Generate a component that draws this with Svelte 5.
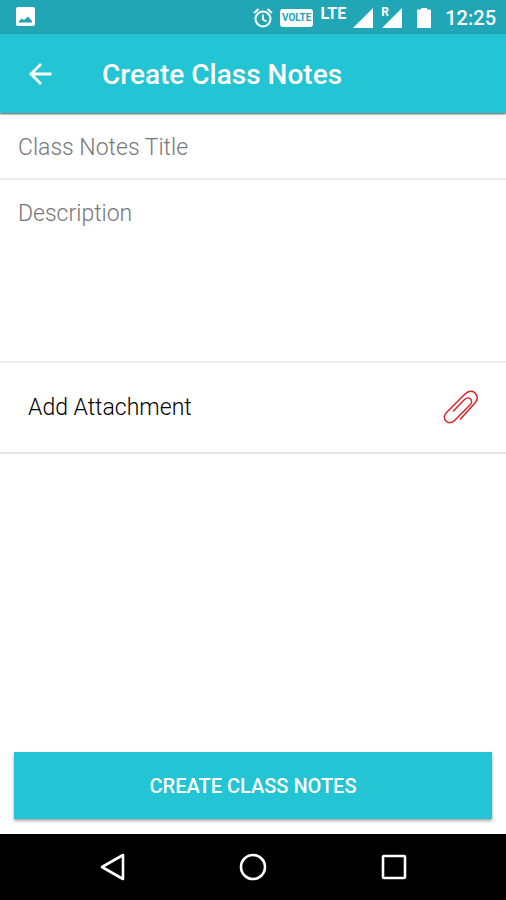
<script>
  let title = $state("");
  let description = $state("");
</script>

<div class="screen">
  <div class="status">
    <svg class="picture" width="20" height="20" viewBox="0 0 20 20">
      <rect x="0" y="0" width="19" height="19" rx="2" fill="#fff" />
      <path d="M3 15.500v-1.500l3-2.500 2 1.500 4-3.500 4 4.500v1.500z" fill="#21a6b6" />
    </svg>
    <div class="signals">
      <svg width="20" height="22" viewBox="0 0 20 22" fill="none" stroke="#fff">
        <circle cx="10" cy="12" r="7.500" stroke-width="2" />
        <path d="M10 7.500v5l3.500 2" stroke-width="1.700" />
        <path d="M1 6l4.500-4M19 6l-4.500-4" stroke-width="2" />
      </svg>
      <span class="volte">VOLTE</span>
      <span class="lte">LTE</span>
      <svg class="cell" width="20" height="20" viewBox="0 0 20 20">
        <path d="M20 0v20H0z" fill="#fff" />
      </svg>
      <span class="roaming">
        <small>R</small>
        <svg width="20" height="20" viewBox="0 0 20 20">
          <path d="M20 0v20H0z" fill="#fff" />
        </svg>
      </span>
      <svg class="battery" width="14" height="20" viewBox="0 0 14 20">
        <path d="M4 0h6v1.500h3q1 0 1 1V19q0 1-1 1H1q-1 0-1-1V2.500q0-1 1-1h3z" fill="#fff" />
      </svg>
      <span class="time">12:25</span>
    </div>
  </div>

  <header>
    <button class="back" aria-label="Back">
      <svg width="24" height="24" viewBox="0 0 24 24" fill="none" stroke="#fff" stroke-width="2.800">
        <path d="M23.500 12H3M13 2L3 12l10 10" />
      </svg>
    </button>
    <h1>Create Class Notes</h1>
  </header>

  <main>
    <input type="text" placeholder="Class Notes Title" aria-label="Class Notes Title" bind:value={title} />
    <textarea placeholder="Description" aria-label="Description" bind:value={description}></textarea>
    <button class="attach">
      <span>Add Attachment</span>
      <svg width="36" height="36" viewBox="0 0 36 36" fill="none" stroke="#d8232a" stroke-width="1.500" stroke-linecap="round">
        <path d="M10.500 21L21 10C23.500 7.500 26 7.500 27.500 9C29 10.500 29 13 27 15L11.500 30.500C9 33 5.500 33.500 3 31C.500 28.500 1 25 3.500 22.500L22 4C25.500 .500 30 .500 32.500 3.500C35 6.500 34.500 10 32 13L17.500 29" />
      </svg>
    </button>
    <div class="footer">
      <button class="create">CREATE CLASS NOTES</button>
    </div>
  </main>

  <nav>
    <button aria-label="Back">
      <svg width="28" height="28" viewBox="0 0 28 28">
        <path d="M25 2v24L4 14z" />
      </svg>
    </button>
    <button aria-label="Home">
      <svg width="28" height="28" viewBox="0 0 28 28">
        <circle cx="14" cy="14" r="12" />
      </svg>
    </button>
    <button aria-label="Recent apps">
      <svg width="28" height="28" viewBox="0 0 28 28">
        <rect x="3" y="3" width="22" height="22" rx="1" />
      </svg>
    </button>
  </nav>
</div>

<style>
  .screen {
    display: flex;
    flex-direction: column;
    min-height: 100vh;
    background: #fff;
    font-family: Roboto, sans-serif;
  }
  button {
    border: 0;
    padding: 0;
    background: none;
    font-family: inherit;
    cursor: pointer;
  }
  svg {
    display: block;
    flex: none;
  }
  .status {
    display: flex;
    justify-content: space-between;
    align-items: center;
    height: 34px;
    padding: 0 10px 0 16px;
    background: #21a6b6;
    color: #fff;
  }
  .signals {
    display: flex;
    align-items: center;
    height: 34px;
    padding-top: 2px;
    box-sizing: border-box;
  }
  .volte {
    margin-left: 7px;
    padding: 0 2px;
    border-radius: 3px;
    background: #fff;
    color: #21a6b6;
    font-size: 10px;
    font-weight: 700;
    line-height: 18px;
  }
  .lte {
    align-self: flex-start;
    margin-left: 7px;
    padding-top: 2px;
    font-size: 16px;
    font-weight: 700;
    line-height: 20px;
  }
  .cell {
    margin-left: 7px;
  }
  .roaming {
    position: relative;
    margin-left: 9px;
  }
  .roaming small {
    position: absolute;
    top: -2px;
    left: -1px;
    font-size: 12px;
    font-weight: 700;
    line-height: 12px;
  }
  .battery {
    margin-left: 15px;
  }
  .time {
    margin-left: 14px;
    font-size: 20px;
    font-weight: 500;
  }
  header {
    display: flex;
    align-items: center;
    height: 79px;
    background: #23c4d3;
    box-shadow: 0 1px 2px rgba(0, 0, 0, 0.7);
    z-index: 1;
  }
  .back {
    margin-left: 28px;
  }
  h1 {
    margin: 2px 0 0 50px;
    color: #fff;
    font-size: 28px;
    font-weight: 500;
    line-height: 34px;
  }
  main {
    display: flex;
    flex-direction: column;
    flex: 1;
  }
  input,
  textarea {
    box-sizing: border-box;
    width: 100%;
    margin: 0;
    border: 0;
    border-bottom: 2px solid #ebebeb;
    outline: none;
    resize: none;
    background: none;
    color: #111;
    font-family: inherit;
    font-size: 23px;
    font-weight: 300;
    line-height: 28px;
  }
  input {
    height: 67px;
    padding: 4px 18px 0;
  }
  textarea {
    display: block;
    height: 183px;
    padding: 20px 18px;
  }
  input::placeholder,
  textarea::placeholder {
    color: #777;
    opacity: 1;
  }
  .attach {
    display: flex;
    justify-content: space-between;
    align-items: center;
    height: 91px;
    padding: 0 27px 0 28px;
    border-bottom: 2px solid #e4e4e4;
    color: #000;
    font-size: 23px;
    font-weight: 300;
    text-align: left;
  }
  .footer {
    margin-top: auto;
    padding: 0 14px 15px;
  }
  .create {
    display: block;
    width: 100%;
    height: 67px;
    background: #23c4d3;
    box-shadow: 0 2px 3px rgba(0, 0, 0, 0.35);
    color: #fff;
    font-size: 20px;
    font-weight: 500;
  }
  nav {
    display: flex;
    justify-content: space-around;
    align-items: center;
    height: 66px;
    padding: 0 42px;
    background: #000;
  }
  nav svg {
    fill: none;
    stroke: #fff;
    stroke-width: 2.600;
    stroke-linejoin: round;
  }
</style>
